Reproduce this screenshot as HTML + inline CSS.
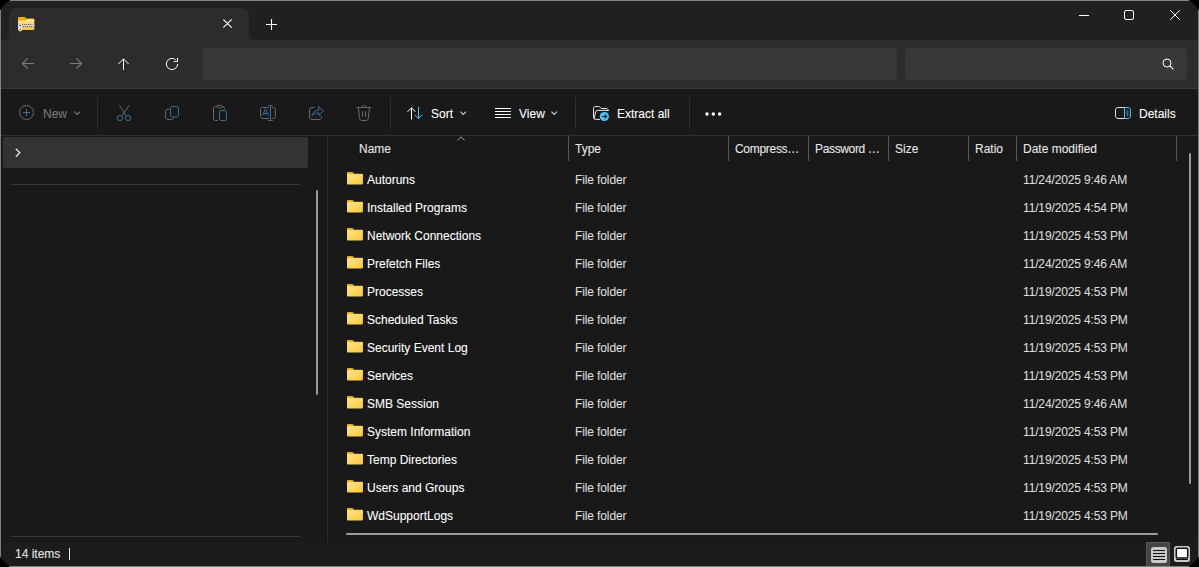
<!DOCTYPE html>
<html><head><meta charset="utf-8">
<style>
*{box-sizing:border-box;margin:0;padding:0}
html,body{width:1199px;height:567px;overflow:hidden;background:#000}
body{position:relative;font-family:"Liberation Sans",sans-serif;font-size:12px;color:#fff}
.a{position:absolute}
svg{position:absolute;overflow:visible}
#root{position:absolute;left:0;top:0;width:1199px;height:567px;clip-path:polygon(0 10px,4.6px 4.6px,10px 0,1189px 0,1194.4px 4.6px,1199px 10px,1199px 557px,1194.4px 562px,1189px 567px,10px 567px,4.6px 562px,0 557px)}
#win{position:absolute;left:0;top:0;width:1199px;height:567px;background:#191919;overflow:hidden}
#title{left:0;top:0;width:1199px;height:40px;background:#202020}
#tab{left:9px;top:8px;width:240px;height:32px;background:#2c2c2c;border-radius:8px 8px 0 0}
.flare{width:5px;height:5px;top:35px;background:#2c2c2c;overflow:hidden}
.flare i{position:absolute;width:10px;height:10px;border-radius:50%;background:#202020}
#nav{left:0;top:40px;width:1199px;height:48px;background:#2c2c2c}
#addr{left:203px;top:48px;width:694px;height:32px;background:#383838;border-radius:4px}
#search{left:905px;top:48px;width:282px;height:32px;background:#383838;border-radius:4px}
#navline{left:0;top:88px;width:1199px;height:1px;background:#3a3a3a}
#tool{left:0;top:89px;width:1199px;height:46px;background:#191919}
#toolline{left:0;top:135px;width:1199px;height:1px;background:#2f2f2f}
.sep{width:1px;background:#2f2f2f}
.t{position:absolute;white-space:nowrap;line-height:14px;-webkit-text-stroke:0.08px currentColor}
.row .t{}
.hdrsep{top:136px;width:1px;height:25px;background:#585858}
.border{position:absolute;background:#7f7f7f}
</style></head><body>
<div id="root">
<div id="win">
  <div class="a" id="title"></div>
  <div class="a" id="tab"></div>
  <div class="a flare" style="left:4px"><i style="left:-5px;top:-5px"></i></div>
  <div class="a flare" style="left:249px"><i style="left:0;top:-5px"></i></div>
  <div class="a" id="nav"></div>
  <div class="a" id="addr"></div>
  <div class="a" id="search"></div>
  <div class="a" id="navline"></div>
  <div class="a" id="tool"></div>
  <div class="a" id="toolline"></div>
</div>


<!-- ===== title bar icons ===== -->
<svg style="left:18px;top:17px" width="17" height="15" viewBox="0 0 17 15">
  <defs><linearGradient id="zg" x1="0" y1="0" x2="0" y2="1"><stop offset="0" stop-color="#ffe69a"/><stop offset=".5" stop-color="#ffd566"/><stop offset="1" stop-color="#ffc53a"/></linearGradient>
  <linearGradient id="zb" x1="0" y1="0" x2="0" y2="1"><stop offset="0" stop-color="#a9a9a9"/><stop offset=".5" stop-color="#e6e6e6"/><stop offset="1" stop-color="#a0a0a0"/></linearGradient></defs>
  <path d="M0 1.2C0 .5.5 0 1.2 0H7l1.5 1.5h6.6c.7 0 1.2.5 1.2 1.2V5H0z" fill="#f2ab00"/>
  <path d="M0 4.5c0-.5.4-1 1-1h6.7l1.6-1.6h5.8c.7 0 1.2.5 1.2 1.2V12c0 .6-.5 1-1 1H1c-.6 0-1-.4-1-1z" fill="url(#zg)"/>
  <rect x="0" y="7" width="16.3" height="3.2" fill="url(#zb)"/>
  <g fill="#7a5a10"><circle cx="4.5" cy="7.6" r=".6"/><circle cx="6.5" cy="7.6" r=".6"/><circle cx="8.5" cy="7.6" r=".6"/><circle cx="10.5" cy="7.6" r=".6"/><circle cx="12.5" cy="7.6" r=".6"/>
  <circle cx="5.4" cy="9.5" r=".6"/><circle cx="7.4" cy="9.5" r=".6"/><circle cx="9.4" cy="9.5" r=".6"/><circle cx="11.4" cy="9.5" r=".6"/><circle cx="13.4" cy="9.5" r=".6"/></g>
  <rect x=".4" y="6.8" width="3.6" height="7.4" rx="1.1" fill="#e4e4e4"/>
  <circle cx="2.2" cy="8.5" r=".8" fill="#3a3a3a"/>
  <circle cx="2.2" cy="12.4" r=".8" fill="#9a7418"/>
</svg>
<svg style="left:223px;top:19px" width="9" height="9" viewBox="0 0 9 9"><path d="M.3.3l8.4 8.4M8.7.3L.3 8.7" stroke="#fff" stroke-width="1.1"/></svg>
<svg style="left:266px;top:19px" width="11" height="11" viewBox="0 0 11 11"><path d="M5.5 0v11M0 5.5h11" stroke="#fff" stroke-width="1.1"/></svg>
<svg style="left:1079px;top:15px" width="10" height="1" viewBox="0 0 10 1"><path d="M0 .5h10" stroke="#fff" stroke-width="1"/></svg>
<svg style="left:1124px;top:10px" width="10" height="10" viewBox="0 0 10 10"><rect x=".5" y=".5" width="9" height="9" rx="1.5" fill="none" stroke="#fff" stroke-width="1"/></svg>
<svg style="left:1170px;top:10px" width="10" height="10" viewBox="0 0 10 10"><path d="M.3.3l9.4 9.4M9.7.3L.3 9.7" stroke="#fff" stroke-width="1"/></svg>

<!-- ===== nav bar icons ===== -->
<svg style="left:22px;top:58px" width="12" height="12" viewBox="0 0 12 12"><path d="M12 5.5H.8M5.7 .3L.5 5.5l5.2 5.2" fill="none" stroke="#7c7c7c" stroke-width="1.15"/></svg>
<svg style="left:70px;top:58px" width="12" height="12" viewBox="0 0 12 12"><path d="M0 5.5h11.2M6.3 .3l5.2 5.2-5.2 5.2" fill="none" stroke="#7c7c7c" stroke-width="1.15"/></svg>
<svg style="left:118px;top:58px" width="12" height="12" viewBox="0 0 12 12"><path d="M5.5 12V.9M.3 6.1l5.2-5.2 5.2 5.2" fill="none" stroke="#fff" stroke-width="1"/></svg>
<svg style="left:166px;top:58px" width="12" height="12" viewBox="0 0 12 12"><path d="M9.6 1.7A5.6 5.6 0 1 0 11.6 6M7.8 3.5h3.7V-.2" fill="none" stroke="#fff" stroke-width="1"/></svg>
<svg style="left:1162px;top:58px" width="12" height="12" viewBox="0 0 12 12"><circle cx="5" cy="5" r="4" fill="none" stroke="#fff" stroke-width="1"/><path d="M7.9 7.9l3.5 3.5" stroke="#fff" stroke-width="1.2"/></svg>


<!-- ===== toolbar ===== -->
<svg style="left:19px;top:105px" width="16" height="16" viewBox="0 0 16 16"><circle cx="7.5" cy="7.5" r="7" fill="none" stroke="#6a6a6a" stroke-width="1"/><path d="M7.5 4v7M4 7.5h7" stroke="#35719a" stroke-width="1"/></svg>
<div class="t" style="left:43px;top:107px;color:#7c7c7c">New</div>
<svg style="left:74px;top:111px" width="7" height="5" viewBox="0 0 7 5"><path d="M.4 .6L3.2 3.4 6 .6" fill="none" stroke="#7a7a7a" stroke-width="1.1"/></svg>
<div class="a sep" style="left:97px;top:97px;height:32px"></div>

<!-- cut -->
<svg style="left:117px;top:105px" width="15" height="17" viewBox="0 0 15 17"><path d="M2.3.3l7 10.2M12.2.3l-7 10.2" fill="none" stroke="#6a6a6a" stroke-width="1"/><circle cx="3" cy="13" r="2.6" fill="none" stroke="#35719a" stroke-width="1"/><circle cx="11" cy="13" r="2.6" fill="none" stroke="#35719a" stroke-width="1"/></svg>
<!-- copy -->
<svg style="left:165px;top:106px" width="15" height="15" viewBox="0 0 15 15"><path d="M4.3 3.3H3C1.6 3.3.5 4.4.5 5.8v5.2c0 1.4 1.1 2.5 2.5 2.5h3.3c1.2 0 2.1-.8 2.4-1.8" fill="none" stroke="#6a6a6a" stroke-width="1"/><rect x="5.5" y=".5" width="8" height="10.5" rx="2.2" fill="none" stroke="#35719a" stroke-width="1"/></svg>
<!-- paste -->
<svg style="left:212px;top:104px" width="16" height="18" viewBox="0 0 16 18"><path d="M5.8 16.5H3.6c-1.2 0-2.1-.9-2.1-2.1V4.6c0-1.2.9-2.1 2.1-2.1h6.8c1.2 0 2.1.9 2.1 2.1V5" fill="none" stroke="#6a6a6a" stroke-width="1"/><rect x="5" y="1.3" width="5" height="2.6" rx="1.3" fill="#191919" stroke="#6a6a6a" stroke-width="1"/><rect x="7.5" y="6.5" width="7" height="10" rx="1.6" fill="none" stroke="#35719a" stroke-width="1"/></svg>
<!-- rename -->
<svg style="left:260px;top:105px" width="17" height="17" viewBox="0 0 17 17"><path d="M8.8 2.5H2.6C1.4 2.5.5 3.4.5 4.6v6.8c0 1.2.9 2.1 2.1 2.1h6.2M12.3 2.5h1C14.5 2.5 15.4 3.4 15.4 4.6v6.8c0 1.2-.9 2.1-2.1 2.1h-1" fill="none" stroke="#6a6a6a" stroke-width="1"/><path d="M2.4 10.8L5.5 3.9l3.1 6.9M3.6 8.6h3.8" fill="none" stroke="#35719a" stroke-width="1"/><path d="M10.5.5v15M8.2.5h4.6M8.2 15.5h4.6" fill="none" stroke="#35719a" stroke-width="1"/></svg>
<!-- share -->
<svg style="left:309px;top:106px" width="16" height="15" viewBox="0 0 16 15"><path d="M5.5 1.5H3C1.6 1.5.5 2.6.5 4v7c0 1.4 1.1 2.5 2.5 2.5h7c1.4 0 2.5-1.1 2.5-2.5V10" fill="none" stroke="#6a6a6a" stroke-width="1"/><path d="M3 9.6C3.8 6.4 6.2 4.3 9.7 4.3V.6l4.7 4.4-4.7 4.5V6.8C7 6.8 4.8 7.8 3 9.6z" fill="none" stroke="#35719a" stroke-width="1" stroke-linejoin="round"/></svg>
<!-- delete -->
<svg style="left:356px;top:105px" width="16" height="17" viewBox="0 0 16 17"><path d="M.6 2.5h14.6M6 2.5V2c0-.8.7-1.5 1.5-1.5h.8c.8 0 1.5.7 1.5 1.5v.5M2.3 2.5l1.3 11c.1 1.1.9 2 2 2h4.6c1.1 0 1.9-.9 2-2l1.3-11M6.5 6.3v5.5M9.5 6.3v5.5" fill="none" stroke="#6a6a6a" stroke-width="1"/></svg>
<div class="a sep" style="left:390px;top:97px;height:32px"></div>

<!-- sort -->
<svg style="left:407px;top:107px" width="17" height="13" viewBox="0 0 17 13"><path d="M4.5 12.5V.8M.5 4.8l4-4 4 4" fill="none" stroke="#fff" stroke-width="1"/><path d="M11.5 0v11.7M7.5 7.7l4 4 4-4" fill="none" stroke="#4cc2ff" stroke-width="1"/></svg>
<div class="t" style="left:431px;top:107px">Sort</div>
<svg style="left:460px;top:111px" width="7" height="5" viewBox="0 0 7 5"><path d="M.4 .6L3.2 3.4 6 .6" fill="none" stroke="#d0d0d0" stroke-width="1.1"/></svg>
<!-- view -->
<svg style="left:495px;top:107px" width="16" height="12" viewBox="0 0 16 12"><path d="M0 1.5h16M0 4.5h16M0 7.5h16M0 10.5h16" stroke="#fff" stroke-width="1"/></svg>
<div class="t" style="left:519px;top:107px">View</div>
<svg style="left:551px;top:111px" width="7" height="5" viewBox="0 0 7 5"><path d="M.4 .6L3.2 3.4 6 .6" fill="none" stroke="#d0d0d0" stroke-width="1.1"/></svg>
<div class="a sep" style="left:575px;top:97px;height:32px"></div>
<!-- extract -->
<svg style="left:593px;top:106px" width="17" height="15" viewBox="0 0 17 15"><path d="M7 13.4H2.6C1.4 13.4.5 12.5.5 11.3V2.6C.5 1.4 1.4.5 2.6.5h3c.5 0 .9.2 1.3.6l1.3 1.4H13c1.2 0 2.1.9 2.2 2.1" fill="none" stroke="#e6e6e6" stroke-width="1"/><path d="M1.2 12.8L2.6 5.8c.2-.9.8-1.4 1.7-1.4h11.6" fill="none" stroke="#e6e6e6" stroke-width="1"/><circle cx="11.4" cy="10.5" r="4.6" fill="#4cc2ff"/><path d="M9.2 10.5h4.3M11.7 8.6l1.9 1.9-1.9 1.9" fill="none" stroke="#0a0a0a" stroke-width="1.1"/></svg>
<div class="t" style="left:617px;top:107px">Extract all</div>
<div class="a sep" style="left:689px;top:97px;height:32px"></div>
<svg style="left:705px;top:112px" width="17" height="4" viewBox="0 0 17 4"><circle cx="2" cy="2" r="1.7" fill="#fff"/><circle cx="8.3" cy="2" r="1.7" fill="#fff"/><circle cx="14.6" cy="2" r="1.7" fill="#fff"/></svg>
<!-- details -->
<svg style="left:1115px;top:107px" width="17" height="13" viewBox="0 0 17 13"><path d="M9.5 .5H3C1.6.5.5 1.6.5 3v6c0 1.4 1.1 2.5 2.5 2.5h6.5" fill="none" stroke="#e0e0e0" stroke-width="1"/><path d="M9.5.5H13c1.4 0 2.5 1.1 2.5 2.5v6c0 1.4-1.1 2.5-2.5 2.5H9.5z" fill="none" stroke="#4cc2ff" stroke-width="1"/><path d="M11.5 4h2M11.5 6h2M11.5 8h2" stroke="#4cc2ff" stroke-width="1"/></svg>
<div class="t" style="left:1139px;top:107px">Details</div>


<!-- ===== nav pane ===== -->
<div class="a" style="left:3px;top:137px;width:305px;height:31px;background:#333333;border-radius:2px"></div>
<svg style="left:15px;top:148px" width="6" height="10" viewBox="0 0 6 10"><path d="M.8.8l4 4-4 4" fill="none" stroke="#e6e6e6" stroke-width="1.3"/></svg>
<div class="a" style="left:11px;top:184px;width:289px;height:1px;background:#3a3a3a"></div>
<div class="a" style="left:11px;top:536px;width:289px;height:1px;background:#3a3a3a"></div>
<div class="a" style="left:316px;top:190px;width:2px;height:205px;background:#9a9a9a;border-radius:1px"></div>
<div class="a" style="left:326px;top:136px;width:1px;height:406px;background:#161616"></div><div class="a" style="left:327px;top:136px;width:1px;height:406px;background:#2c2c2c"></div>

<!-- ===== header ===== -->
<div class="t" style="left:359px;top:142px;color:#e8e8e8">Name</div>
<svg style="left:457px;top:136px" width="8" height="5" viewBox="0 0 8 5"><path d="M.3 4.5L4 .8l3.7 3.7" fill="none" stroke="#a0a0a0" stroke-width="1"/></svg>
<div class="a hdrsep" style="left:568px"></div>
<div class="t" style="left:575px;top:142px;color:#e8e8e8">Type</div>
<div class="a hdrsep" style="left:728px"></div>
<div class="t" style="left:735px;top:142px;color:#e8e8e8;letter-spacing:-0.3px">Compress…</div>
<div class="a hdrsep" style="left:808px"></div>
<div class="t" style="left:815px;top:142px;color:#e8e8e8;letter-spacing:-0.35px">Password …</div>
<div class="a hdrsep" style="left:888px"></div>
<div class="t" style="left:895px;top:142px;color:#e8e8e8">Size</div>
<div class="a hdrsep" style="left:968px"></div>
<div class="t" style="left:975px;top:142px;color:#e8e8e8">Ratio</div>
<div class="a hdrsep" style="left:1016px"></div>
<div class="t" style="left:1023px;top:142px;color:#e8e8e8">Date modified</div>
<div class="a hdrsep" style="left:1176px"></div>

<svg width="0" height="0" style="position:absolute"><defs>
<linearGradient id="fg" x1="0" y1="0" x2="1" y2="1"><stop offset="0" stop-color="#ffe38f"/><stop offset="1" stop-color="#ffc933"/></linearGradient>
<symbol id="fold" viewBox="0 0 17 14"><path d="M0 1.3C0 .6.6 0 1.3 0h4.5l2 2h7.9c.7 0 1.3.6 1.3 1.3V6H0z" fill="#f4b30a"/><rect x="0" y="2.2" width="16.9" height="11.3" rx="1.1" fill="url(#fg)"/></symbol>
</defs></svg>
<svg style="left:347px;top:172px" width="16" height="13" viewBox="0 0 17 14" preserveAspectRatio="none"><use href="#fold"/></svg><div class="t" style="left:367px;top:173px">Autoruns</div><div class="t" style="left:575px;top:173px;color:#dcdcdc;letter-spacing:-0.12px">File folder</div><div class="t" style="left:1023px;top:173px;color:#dcdcdc;letter-spacing:-0.14px">11/24/2025 9:46 AM</div>
<svg style="left:347px;top:200px" width="16" height="13" viewBox="0 0 17 14" preserveAspectRatio="none"><use href="#fold"/></svg><div class="t" style="left:367px;top:201px">Installed Programs</div><div class="t" style="left:575px;top:201px;color:#dcdcdc;letter-spacing:-0.12px">File folder</div><div class="t" style="left:1023px;top:201px;color:#dcdcdc;letter-spacing:-0.14px">11/19/2025 4:54 PM</div>
<svg style="left:347px;top:228px" width="16" height="13" viewBox="0 0 17 14" preserveAspectRatio="none"><use href="#fold"/></svg><div class="t" style="left:367px;top:229px">Network Connections</div><div class="t" style="left:575px;top:229px;color:#dcdcdc;letter-spacing:-0.12px">File folder</div><div class="t" style="left:1023px;top:229px;color:#dcdcdc;letter-spacing:-0.14px">11/19/2025 4:53 PM</div>
<svg style="left:347px;top:256px" width="16" height="13" viewBox="0 0 17 14" preserveAspectRatio="none"><use href="#fold"/></svg><div class="t" style="left:367px;top:257px">Prefetch Files</div><div class="t" style="left:575px;top:257px;color:#dcdcdc;letter-spacing:-0.12px">File folder</div><div class="t" style="left:1023px;top:257px;color:#dcdcdc;letter-spacing:-0.14px">11/24/2025 9:46 AM</div>
<svg style="left:347px;top:284px" width="16" height="13" viewBox="0 0 17 14" preserveAspectRatio="none"><use href="#fold"/></svg><div class="t" style="left:367px;top:285px">Processes</div><div class="t" style="left:575px;top:285px;color:#dcdcdc;letter-spacing:-0.12px">File folder</div><div class="t" style="left:1023px;top:285px;color:#dcdcdc;letter-spacing:-0.14px">11/19/2025 4:53 PM</div>
<svg style="left:347px;top:312px" width="16" height="13" viewBox="0 0 17 14" preserveAspectRatio="none"><use href="#fold"/></svg><div class="t" style="left:367px;top:313px">Scheduled Tasks</div><div class="t" style="left:575px;top:313px;color:#dcdcdc;letter-spacing:-0.12px">File folder</div><div class="t" style="left:1023px;top:313px;color:#dcdcdc;letter-spacing:-0.14px">11/19/2025 4:53 PM</div>
<svg style="left:347px;top:340px" width="16" height="13" viewBox="0 0 17 14" preserveAspectRatio="none"><use href="#fold"/></svg><div class="t" style="left:367px;top:341px">Security Event Log</div><div class="t" style="left:575px;top:341px;color:#dcdcdc;letter-spacing:-0.12px">File folder</div><div class="t" style="left:1023px;top:341px;color:#dcdcdc;letter-spacing:-0.14px">11/19/2025 4:53 PM</div>
<svg style="left:347px;top:368px" width="16" height="13" viewBox="0 0 17 14" preserveAspectRatio="none"><use href="#fold"/></svg><div class="t" style="left:367px;top:369px">Services</div><div class="t" style="left:575px;top:369px;color:#dcdcdc;letter-spacing:-0.12px">File folder</div><div class="t" style="left:1023px;top:369px;color:#dcdcdc;letter-spacing:-0.14px">11/19/2025 4:53 PM</div>
<svg style="left:347px;top:396px" width="16" height="13" viewBox="0 0 17 14" preserveAspectRatio="none"><use href="#fold"/></svg><div class="t" style="left:367px;top:397px">SMB Session</div><div class="t" style="left:575px;top:397px;color:#dcdcdc;letter-spacing:-0.12px">File folder</div><div class="t" style="left:1023px;top:397px;color:#dcdcdc;letter-spacing:-0.14px">11/24/2025 9:46 AM</div>
<svg style="left:347px;top:424px" width="16" height="13" viewBox="0 0 17 14" preserveAspectRatio="none"><use href="#fold"/></svg><div class="t" style="left:367px;top:425px">System Information</div><div class="t" style="left:575px;top:425px;color:#dcdcdc;letter-spacing:-0.12px">File folder</div><div class="t" style="left:1023px;top:425px;color:#dcdcdc;letter-spacing:-0.14px">11/19/2025 4:53 PM</div>
<svg style="left:347px;top:452px" width="16" height="13" viewBox="0 0 17 14" preserveAspectRatio="none"><use href="#fold"/></svg><div class="t" style="left:367px;top:453px">Temp Directories</div><div class="t" style="left:575px;top:453px;color:#dcdcdc;letter-spacing:-0.12px">File folder</div><div class="t" style="left:1023px;top:453px;color:#dcdcdc;letter-spacing:-0.14px">11/19/2025 4:53 PM</div>
<svg style="left:347px;top:480px" width="16" height="13" viewBox="0 0 17 14" preserveAspectRatio="none"><use href="#fold"/></svg><div class="t" style="left:367px;top:481px">Users and Groups</div><div class="t" style="left:575px;top:481px;color:#dcdcdc;letter-spacing:-0.12px">File folder</div><div class="t" style="left:1023px;top:481px;color:#dcdcdc;letter-spacing:-0.14px">11/19/2025 4:53 PM</div>
<svg style="left:347px;top:508px" width="16" height="13" viewBox="0 0 17 14" preserveAspectRatio="none"><use href="#fold"/></svg><div class="t" style="left:367px;top:509px">WdSupportLogs</div><div class="t" style="left:575px;top:509px;color:#dcdcdc;letter-spacing:-0.12px">File folder</div><div class="t" style="left:1023px;top:509px;color:#dcdcdc;letter-spacing:-0.14px">11/19/2025 4:53 PM</div>

<div class="a" style="left:346px;top:533px;width:812px;height:2px;background:#9a9a9a;border-radius:1px"></div>
<div class="a" style="left:1189px;top:153px;width:2px;height:331px;background:#9a9a9a;border-radius:1px"></div>

<!-- ===== status bar ===== -->
<div class="a" style="left:0;top:542px;width:1199px;height:25px;background:#1c1c1c"></div>
<div class="t" style="left:15px;top:547px;color:#e8e8e8">14 items</div>
<div class="a" style="left:69px;top:548px;width:1px;height:12px;background:#e8e8e8"></div>
<div class="a" style="left:1146px;top:542px;width:24px;height:25px;background:#454545;border:1px solid #555"></div>
<svg style="left:1151px;top:547px" width="16" height="16" viewBox="0 0 16 16"><rect x="0" y="0" width="16" height="16" rx="2.5" fill="#c8c8c8"/><path d="M2 3.5h12M2 6.5h12M2 9.5h12M2 12.5h12" stroke="#111" stroke-width="1.1"/></svg>
<svg style="left:1174px;top:546px" width="16" height="16" viewBox="0 0 16 16"><rect x="0" y="0" width="16" height="16" rx="2.5" fill="#c8c8c8"/><rect x="2.3" y="2.3" width="11.4" height="9.7" rx="1.2" fill="#fff" stroke="#111" stroke-width="1.5"/><path d="M2 13.5h12" stroke="#111" stroke-width="1.1"/></svg>

<!-- borders -->
<div class="border" style="left:10px;top:0;width:1179px;height:1px"></div>
<div class="border" style="left:9px;top:566px;width:1180px;height:1px"></div>
<div class="border" style="left:0;top:10px;width:1px;height:547px"></div>
<div class="border" style="left:1198px;top:10px;width:1px;height:547px"></div>

</div>
</body></html>
